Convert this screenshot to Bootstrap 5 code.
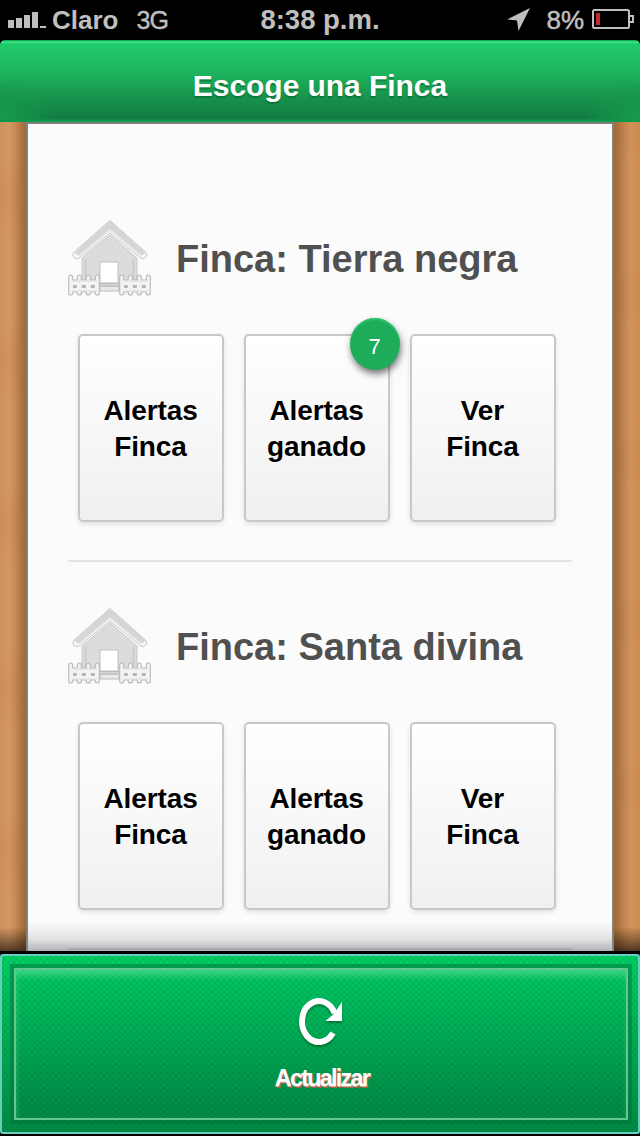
<!DOCTYPE html>
<html lang="es">
<head>
<meta charset="utf-8">
<meta name="viewport" content="width=device-width, initial-scale=1">
<title>Escoge una Finca</title>
<link href="https://cdn.jsdelivr.net/npm/bootstrap@5.3.0/dist/css/bootstrap.min.css" rel="stylesheet">
<style>
  body { font-family: "Liberation Sans", Arial, sans-serif; background: #000; height: 1136px; }
  .status { height: 40px; color: #bfbfbf; font-size: 26px; line-height: 40px; padding: 0 6px 0 8px; }
  .status .side { flex: 1 1 0; }
  .carrier { margin-left: 6px; }
  .net { font-size: 25px; letter-spacing: -.8px; margin-left: 18px; -webkit-text-stroke: .4px #bfbfbf; }
  .clock { font-size: 27.500px; margin-right: 2px; }
  .pct { -webkit-text-stroke: .5px #bfbfbf; }
  .battery { margin-bottom: 2px; }
  .topbar { height: 82px; padding: 9px 0 0; border-radius: 5px 5px 0 0; z-index: 2;
    background: linear-gradient(#0fa850 0 1px, #35da7c 1px 3px, #20cb6b 4px, #1eb75f 30px, #18964d 55px, #127a41 79px, #0b9a49 80px); }
  .topbar::before, .topbar::after { content: ""; position: absolute; bottom: 2px; width: 60px; height: 40px; }
  .topbar::before { left: 0; background: radial-gradient(ellipse at 0 100%, #159c4d, transparent 70%); }
  .topbar::after { right: 0; background: radial-gradient(ellipse at 100% 100%, #159c4d, transparent 70%); }
  .topbar h1 { font-size: 30px; letter-spacing: -.05px; color: #fff; text-shadow: 0 2px 1px #075c2c88; z-index: 1; }
  .wood { height: 829px; padding: 0 26px;
    background:
      linear-gradient(transparent 805px, #0009 829px),
      linear-gradient(90deg, transparent 8px, #7b451988 27px, transparent 27px 613px, #7b451988 613px, transparent 632px),
      repeating-linear-gradient(174deg, #dfa06800 0 37px, #a9622c18 72px, #dfa06800 120px 163px),
      linear-gradient(90deg, #cd915c, #db9d66 14px, #ca8c52 27px 613px, #d79b63 626px, #cd8c50); }
  .paper { height: 829px; border: 2px solid #80827f; border-bottom: 0; padding: 50px 40px 0;
    background: linear-gradient(#fbfbfb00 798px, #e2e2e4 815px, #b4b4b8 827px), #fbfbfb; }
  .finca { height: 388px; padding-top: 46px; border-bottom: 2px solid #00000018; }
  .finca h2 { font-size: 38px; line-height: 79px; height: 77px; color: #505050; margin: 0 0 0 24px; text-shadow: 0 1px 0 #fff; white-space: nowrap; }
  .tiles { gap: 20px; margin: 37px 0 0 10px; }
  .tile { width: 146px; height: 188px; padding: 2px 1px 0 0; border: 2px solid #c8c8c8; border-radius: 5px; color: #000; font-size: 28px; font-weight: 700; line-height: 36px; letter-spacing: -.1px;
    background: linear-gradient(#fff, #f0f0f0); box-shadow: 0 2px 5px #0000001c; text-shadow: 0 1px 0 #fff; }
  .count { right: -12px; top: -18px; width: 50px; height: 52px; padding: 5px 1px 0 0; border-radius: 50%; background: #1eac5b; color: #fff; font-size: 22px; font-weight: 400; text-shadow: none;
    box-shadow: 1px 4px 7px #0008, inset 0 2px 1px #2bc670; }
  .footer-frame { height: 180px; margin-top: 3px; border: 2px solid #68cdb9; border-radius: 3px; padding: 12px 10px 12px 12px;
    background:
      radial-gradient(circle at 3px 3px, #00391c30 0, transparent 2.400px) 0 0/6px 6px,
      radial-gradient(circle at 3px 3px, #00391c30 0, transparent 2.400px) 3px 3px/6px 6px,
      linear-gradient(#00d066, #008c46); }
  .refresh { border: 2px solid #62c890; border-radius: 0; padding: 26px 0 0; outline: 4px solid #006e3877; color: #fff;
    box-shadow: inset 0 8px 6px -2px #7ce5aa70, inset 3px 0 4px #7ce5aa18;
    background: linear-gradient(#00be6000, #003e1d18); }
  .refresh svg { margin-left: 2px; filter: drop-shadow(0 2px 1px #00442288); }
  .refresh span { font-size: 23.500px; font-weight: 700; letter-spacing: -1.800px; line-height: 28px; margin-left: 2px; text-shadow: 0 1px 0 #d9a493, 1px 2px 0 #a8604a; }
</style>
</head>
<body class="d-flex flex-column overflow-hidden">
<svg class="d-none">
  <defs>
    <g id="pickets">
      <path d="M.7 57.500q0-2.500 2-2.500t2 2.500V60h4.600v-2.500q0-2.500 2-2.500t2 2.500V60h5v-2.500q0-2.500 2-2.500t2 2.500V60h5v-2.500q0-2.500 2-2.500t2 2.500V74q-2 2-4 0v-2h-5v2q-2 2-4 0v-2h-5v2q-2 2-4 0v-2h-4.600v2q-2 2-4 0z" fill="#f3f3f3" stroke="#b9bab9" stroke-width="1.100"/>
      <path d="M5 66.500h3.800m5 0h4m5 0h4" stroke="#b4b6b4" stroke-width="3"/>
      <path d="M5 61h24M5 71h24" stroke="#dcdcdc"/>
    </g>
    <symbol id="house" viewBox="0 0 84 77">
      <path d="M14 38 42 15l27 23v32H14z" fill="#dadddb" stroke="#c6c9c7"/>
      <path d="M17.500 39v26M65.500 39v26" stroke="#cacdcb" stroke-width="2"/>
      <path d="M32 42h18v21H32z" fill="#fff" stroke="#c0c0c0"/>
      <path d="M32 63.500h19v7.500H32z" fill="#e9e9e9" stroke="#b9bbb9"/>
      <path d="M32 64.500h19v2.500H32z" fill="#c4c6c5"/>
      <path d="M42 .5 6 32q-2.500 3 0 5.500 2 2.500 5 .5L42 13l31 25q3 1.500 5-1 2-3-1-5.500z" fill="#f7f7f7" stroke="#c3c6c3" stroke-linejoin="round"/>
      <path d="M42 1 6.500 32.500 10 35.500 42 9l32 26.500 3.500-3z" fill="#d3d6d3"/>
      <path d="M11 35.500 42 10l31 25.500" fill="none" stroke="#cfd2cf" stroke-width=".8"/>
      <use href="#pickets"/><use href="#pickets" x="51"/>
    </symbol>
  </defs>
</svg>

<div class="status d-flex flex-shrink-0">
  <div class="side d-flex align-items-center">
    <svg width="38" height="16" fill="#bfbfbf"><path d="M0 8h6v8H0zM8 6h6v10H8zM16 3h6v13h-6zM24 0h6v16h-6zM32 14h6v2h-6z"/></svg>
    <b class="carrier">Claro</b><span class="net">3G</span>
  </div>
  <b class="clock">8:38 p.m.</b>
  <div class="side d-flex align-items-center justify-content-end">
    <svg width="24" height="24" class="loc me-3" fill="#bfbfbf"><path d="M24 0 12.500 23 11 12.500 1 11.500z"/></svg>
    <span class="pct me-2">8%</span>
    <svg width="42" height="20" class="battery" fill="none" stroke="#bfbfbf" stroke-width="2"><rect x="1" y="1" width="36" height="18" rx="1.500"/><path d="M38 7h3v6h-3"/><path d="M4 4h4v12H4z" fill="#c4292b" stroke="none"/></svg>
  </div>
</div>

<header class="topbar position-relative d-flex flex-shrink-0 align-items-center justify-content-center">
  <h1 class="fw-bold m-0 position-relative">Escoge una Finca</h1>
</header>

<main class="wood flex-shrink-0">
  <div class="paper">
    <section class="finca">
      <div class="d-flex"><svg width="84" height="77"><use href="#house"/></svg><h2 class="fw-bold">Finca: Tierra negra</h2></div>
      <div class="tiles d-flex">
        <button class="tile btn">Alertas<br>Finca</button>
        <button class="tile btn position-relative">Alertas<br>ganado<span class="count position-absolute d-flex align-items-center justify-content-center">7</span></button>
        <button class="tile btn">Ver<br>Finca</button>
      </div>
    </section>
    <section class="finca">
      <div class="d-flex"><svg width="84" height="77"><use href="#house"/></svg><h2 class="fw-bold">Finca: Santa divina</h2></div>
      <div class="tiles d-flex">
        <button class="tile btn">Alertas<br>Finca</button>
        <button class="tile btn">Alertas<br>ganado</button>
        <button class="tile btn">Ver<br>Finca</button>
      </div>
    </section>
  </div>
</main>

<footer class="footer-frame flex-shrink-0">
  <button class="refresh btn w-100 h-100 d-flex flex-column align-items-center justify-content-start">
    <svg width="46" height="52" viewBox="0 0 46 52" fill="none">
      <path d="M34 37.100A17 20.500 0 1 1 35.500 17.100" stroke="#fff" stroke-width="6"/>
      <path d="M43 5.700V25H26.500l7-6 4-5z" fill="#fff"/>
    </svg>
    <span class="mt-3">Actualizar</span>
  </button>
</footer>
<script src="https://cdn.jsdelivr.net/npm/bootstrap@5.3.0/dist/js/bootstrap.bundle.min.js"></script>
</body>
</html>
